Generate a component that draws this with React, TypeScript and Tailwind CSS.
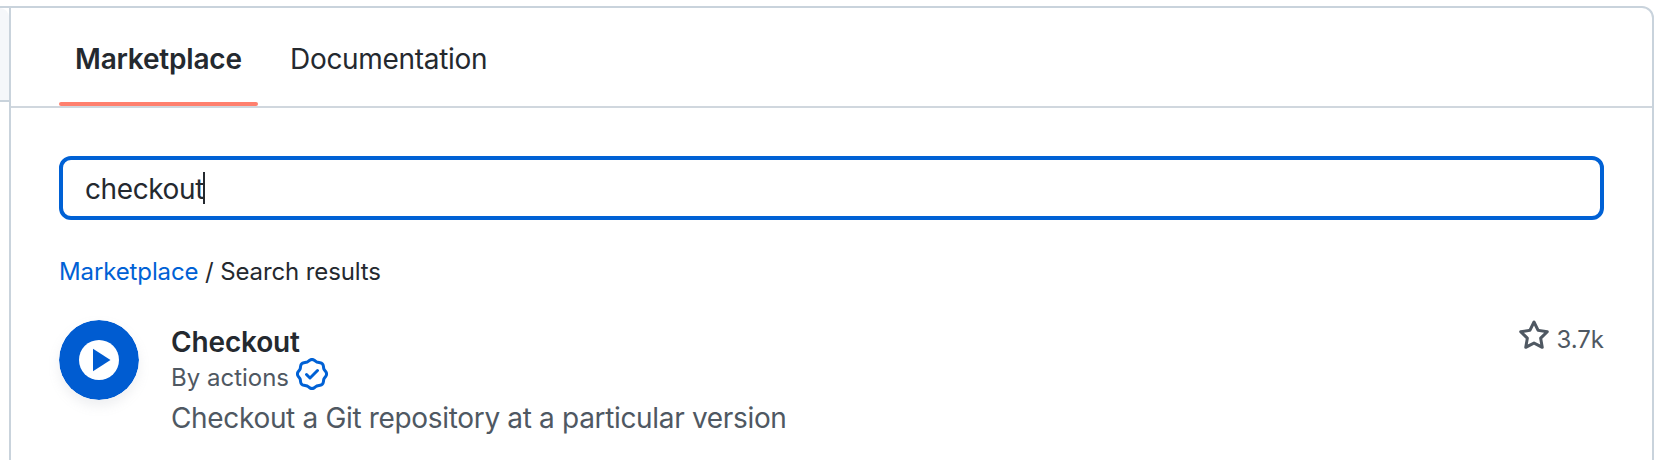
const VERIFIED =
  'm9.585.52.929.68c.153.112.331.186.518.215l1.138.175a2.678 2.678 0 0 1 2.24 2.24l.174 1.139c.029.187.103.365.215.518l.68.928a2.677 2.677 0 0 1 0 3.17l-.68.928a1.174 1.174 0 0 0-.215.518l-.175 1.138a2.678 2.678 0 0 1-2.241 2.241l-1.138.175a1.17 1.17 0 0 0-.518.215l-.928.68a2.677 2.677 0 0 1-3.17 0l-.928-.68a1.174 1.174 0 0 0-.518-.215L3.83 14.41a2.678 2.678 0 0 1-2.24-2.24l-.175-1.138a1.17 1.17 0 0 0-.215-.518l-.68-.928a2.677 2.677 0 0 1 0-3.17l.68-.928c.112-.153.186-.331.215-.518l.175-1.14a2.678 2.678 0 0 1 2.24-2.24l1.139-.175c.187-.029.365-.103.518-.215l.928-.68a2.677 2.677 0 0 1 3.17 0ZM7.303 1.728l-.927.68a2.67 2.67 0 0 1-1.18.489l-1.137.174a1.179 1.179 0 0 0-.987.987l-.174 1.136a2.677 2.677 0 0 1-.489 1.18l-.68.928a1.18 1.18 0 0 0 0 1.394l.68.927c.256.348.424.753.489 1.18l.174 1.137c.078.509.478.909.987.987l1.136.174a2.67 2.67 0 0 1 1.18.489l.928.68c.414.305.979.305 1.394 0l.927-.68a2.67 2.67 0 0 1 1.18-.489l1.137-.174a1.18 1.18 0 0 0 .987-.987l.174-1.136a2.67 2.67 0 0 1 .489-1.18l.68-.928a1.176 1.176 0 0 0 0-1.394l-.68-.927a2.686 2.686 0 0 1-.489-1.18l-.174-1.137a1.179 1.179 0 0 0-.987-.987l-1.136-.174a2.677 2.677 0 0 1-1.18-.489l-.928-.68a1.176 1.176 0 0 0-1.394 0ZM11.28 6.78l-3.75 3.75a.75.75 0 0 1-1.06 0L4.72 8.78a.751.751 0 0 1 .018-1.042.751.751 0 0 1 1.042-.018L7 8.94l3.22-3.22a.751.751 0 0 1 1.042.018.751.751 0 0 1 .018 1.042Z';
const STAR =
  'M8 .25a.75.75 0 01.673.418l1.882 3.815 4.21.612a.75.75 0 01.416 1.279l-3.046 2.97.719 4.192a.75.75 0 01-1.088.791L8 12.347l-3.766 1.98a.75.75 0 01-1.088-.79l.72-4.194L.818 6.374a.75.75 0 01.416-1.28l4.21-.611L7.327.668A.75.75 0 018 .25zm0 2.445L6.615 5.5a.75.75 0 01-.564.41l-3.097.45 2.24 2.184a.75.75 0 01.216.664l-.528 3.084 2.769-1.456a.75.75 0 01.698 0l2.77 1.456-.53-3.084a.75.75 0 01.216-.664l2.24-2.183-3.096-.45a.75.75 0 01-.564-.41L8 2.694v.001z';

function Icon({ d }: { d: string }) {
  return (
    <svg viewBox="0 0 16 16" className="size-8 shrink-0" fill="currentColor" fillRule="evenodd">
      <path d={d} />
    </svg>
  );
}

function Tabs() {
  return (
    <nav className="flex h-[100px] border-b-2 border-[#d0d7de] pl-12 text-[28px] leading-[42px]">
      <div className="-mb-0.5 flex w-[199px] flex-col">
        <span className="mt-[30px] pl-4 font-semibold tracking-[-0.2px]">Marketplace</span>
        <span className="mt-[22px] h-1 rounded-full bg-[#ff806e]" />
      </div>
      <span className="mt-[30px] pl-8 tracking-[-0.3px]">Documentation</span>
    </nav>
  );
}

function Result() {
  return (
    <article className="mt-[30px] flex">
      <svg viewBox="0 0 80 80" className="size-20 shrink-0 rounded-full shadow-[0_6px_12px_rgba(140,149,159,0.15)]">
        <circle cx="40" cy="40" r="40" fill="#005cd1" />
        <circle cx="40" cy="40" r="20" fill="#fff" />
        <path d="M34 28.7 51.5 40 34 51.3Z" fill="#005cd1" />
      </svg>
      <div className="ml-8 flex-1 pt-px">
        <h2 className="h-[41px] text-[28px] leading-[42px] font-semibold tracking-[-0.15px]">Checkout</h2>
        <div className="flex h-8 items-center text-2xl leading-8 text-[#4f5862]">
          <span>By actions</span>
          <span className="-mt-2 ml-[7px] text-[#0061d5]"><Icon d={VERIFIED} /></span>
        </div>
        <p className="mt-[3px] text-[28px] leading-[42px] tracking-[-0.33px] text-[#4f5862]">
          Checkout a Git repository at a particular version
        </p>
      </div>
      <div className="flex h-9 items-start gap-1.5 text-2xl leading-9 text-[#4f5862]">
        <Icon d={STAR} />
        <span className="mt-0.5">3.7k</span>
      </div>
    </article>
  );
}

export default function App() {
  return (
    <div className="flex h-[460px] w-[1660px] overflow-hidden bg-white font-['Inter',sans-serif] text-[#24292f]">
      <div className="mt-1.5 h-24 w-[9px] border-y-2 border-[#c9d3dc]">
        <div className="h-full rounded-tr-[10px] bg-[#f5f7fa]" />
      </div>
      <section className="mt-1.5 h-[480px] w-[1645px] rounded-tr-xl border-2 border-[#c9d3dc]">
        <Tabs />
        <div className="px-12">
          <div className="mt-12 flex h-16 items-center rounded-xl border-4 border-[#0061d5] pl-[22px] text-[28px] leading-[42px]">
            <span className="mt-0.5 tracking-[-0.4px]">checkout</span>
            <span className="-ml-px h-8 w-0.5 bg-[#24292f]" />
          </div>
          <div className="mt-[34px] text-2xl leading-9 tracking-[-0.12px]">
            <span className="text-[#0061d5]">Marketplace</span> / Search results
          </div>
          <Result />
        </div>
      </section>
    </div>
  );
}
